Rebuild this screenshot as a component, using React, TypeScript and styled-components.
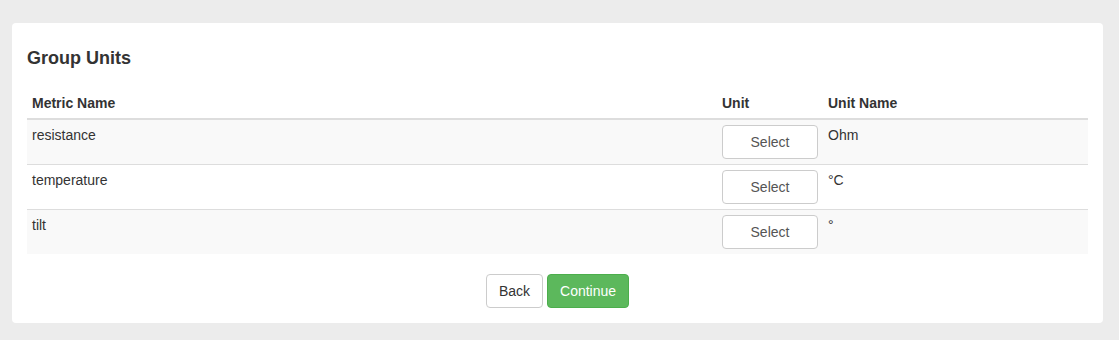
import styled, { createGlobalStyle } from "styled-components"

const GlobalStyle = createGlobalStyle`
  html, body {
    margin: 0;
    padding: 0;
    background: #ececec;
  }
  body {
    font-family: "Liberation Sans", Arial, sans-serif;
    font-size: 14px;
    line-height: 20px;
    color: #333;
  }
`

const Page = styled.div`
  padding: 23px 16px 17px 12px;
`

const Card = styled.div`
  background: #fff;
  border-radius: 4px;
  padding: 15px;
`

const Title = styled.h4`
  margin: 10px 0 20px;
  font-size: 18px;
  font-weight: bold;
  line-height: 20px;
  color: #333;
`

const Table = styled.table`
  width: 100%;
  border-collapse: collapse;
  border-spacing: 0;
  margin-bottom: 20px;

  th {
    text-align: left;
    font-weight: bold;
    padding: 5px;
    border-bottom: 2px solid #ddd;
    vertical-align: bottom;
  }

  td {
    padding: 5px;
    vertical-align: top;
    border-top: 1px solid #ddd;
  }

  tbody tr:first-child td {
    border-top: 0;
  }

  tbody tr:nth-child(odd) {
    background: #f9f9f9;
  }
`

const SelectButton = styled.button`
  display: block;
  width: 96px;
  height: 34px;
  padding: 6px 12px;
  font-family: inherit;
  font-size: 14px;
  line-height: 20px;
  color: #555;
  background: #fff;
  border: 1px solid #ccc;
  border-radius: 4px;
`

const Actions = styled.div`
  display: flex;
  justify-content: center;
  gap: 4px;
`

const ActionButton = styled.button<{ primary?: boolean }>`
  height: 34px;
  padding: 6px 12px;
  font-family: inherit;
  font-size: 14px;
  line-height: 20px;
  border-radius: 4px;
  border: 1px solid ${p => (p.primary ? "#4cae4c" : "#ccc")};
  background: ${p => (p.primary ? "#5cb85c" : "#fff")};
  color: ${p => (p.primary ? "#fff" : "#333")};
`

const rows = [
  { metric: "resistance", unit: "Ohm" },
  { metric: "temperature", unit: "°C" },
  { metric: "tilt", unit: "°" },
]

const App = () => {
  return (
    <Page>
      <GlobalStyle />
      <Card>
        <Title>Group Units</Title>
        <Table>
          <colgroup>
            <col />
            <col style={{ width: 106 }} />
            <col style={{ width: 265 }} />
          </colgroup>
          <thead>
            <tr>
              <th>Metric Name</th>
              <th>Unit</th>
              <th>Unit Name</th>
            </tr>
          </thead>
          <tbody>
            {rows.map(r => (
              <tr key={r.metric}>
                <td>{r.metric}</td>
                <td>
                  <SelectButton>Select</SelectButton>
                </td>
                <td>{r.unit}</td>
              </tr>
            ))}
          </tbody>
        </Table>
        <Actions>
          <ActionButton>Back</ActionButton>
          <ActionButton primary>Continue</ActionButton>
        </Actions>
      </Card>
    </Page>
  )
}

export default App
